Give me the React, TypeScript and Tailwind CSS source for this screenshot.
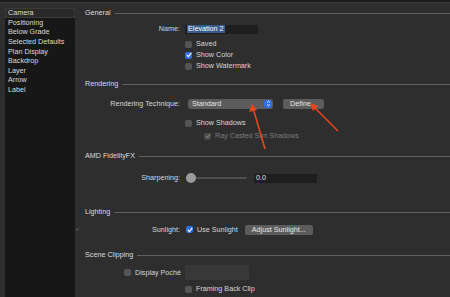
import React from "react"

const sidebarItems = [
  "Camera",
  "Positioning",
  "Below Grade",
  "Selected Defaults",
  "Plan Display",
  "Backdrop",
  "Layer",
  "Arrow",
  "Label",
]

function Header({ title, className = "" }: { title: string; className?: string }) {
  return (
    <div className={`flex h-[10px] items-center gap-[4px] pl-[10px] ${className}`}>
      <span className="text-[#dcdcdc]">{title}</span>
      <div className="h-px flex-1 bg-[#606060]" />
    </div>
  )
}

function Check({ checked = false, disabled = false }: { checked?: boolean; disabled?: boolean }) {
  if (checked) {
    return (
      <span
        className={`flex h-[7px] w-[7px] shrink-0 items-center justify-center rounded-[2px] ${
          disabled ? "bg-[#4a4a4a]" : "bg-[#2f6ee0]"
        }`}
      >
        <svg width="6" height="6" viewBox="0 0 6 6">
          <path
            d="M1 3.2 L2.4 4.7 L5 1.2"
            fill="none"
            stroke={disabled ? "#7a7a7a" : "#fff"}
            strokeWidth="1.1"
            strokeLinecap="round"
            strokeLinejoin="round"
          />
        </svg>
      </span>
    )
  }
  return <span className="h-[7px] w-[7px] shrink-0 rounded-[2px] bg-[#555555]" />
}

function Row({ label, children, className = "" }: { label?: string; children: React.ReactNode; className?: string }) {
  return (
    <div className={`flex items-center ${className}`}>
      <div className="w-[105px] text-right text-[#d6d6d6]">{label ? `${label}:` : ""}</div>
      <div className="flex items-center">{children}</div>
    </div>
  )
}

function CheckLine({
  label,
  checked,
  disabled,
  className = "",
}: {
  label: string
  checked?: boolean
  disabled?: boolean
  className?: string
}) {
  return (
    <div className={`flex h-[8px] items-center gap-[4px] whitespace-nowrap ${className}`}>
      <Check checked={checked} disabled={disabled} />
      <span className={disabled ? "text-[#7c7c7c]" : "text-[#d6d6d6]"}>{label}</span>
    </div>
  )
}

export default function App() {
  return (
    <div
      className="flex h-[297px] w-[450px] flex-col overflow-hidden bg-[#2e2e2e] text-[7.2px] leading-none"
      style={{ fontFamily: '"Liberation Sans", Arial, sans-serif' }}
    >
      <div className="h-[2px] shrink-0 bg-[#1b1b1b]" />
      <div className="h-px shrink-0 bg-[#3c3c3c]" />
      <div className="flex min-h-0 flex-1">
        {/* Sidebar */}
        <div className="ml-[5px] mt-[5px] w-[70px] bg-[#171717]">
          {sidebarItems.map((item, i) => (
            <div
              key={item}
              className={`flex h-[9.6px] items-center text-[#dadada] ${
                i === 0 ? "border border-[#3a3a3a] bg-[#2a2a2a] pl-[2px]" : "pl-[3px]"
              }`}
            >
              {item}
            </div>
          ))}
        </div>

        {/* Main */}
        <div className="relative flex-1 overflow-hidden">
          <Header title="General" className="mt-[5px]" />

          <Row label="Name" className="mt-[6px] h-[10px]">
            <div className="ml-[5px] flex h-[9px] w-[73px] items-center bg-[#1e1e1e] pl-[2px]">
              <span className="bg-[#3a5a8c] px-px text-white">Elevation 2</span>
            </div>
          </Row>

          <CheckLine label="Saved" className="ml-[110px] mt-[6px]" />
          <CheckLine label="Show Color" checked className="ml-[110px] mt-[3px]" />
          <CheckLine label="Show Watermark" className="ml-[110px] mt-[3px]" />

          <Header title="Rendering" className="mt-[9px]" />

          <Row label="Rendering Technique" className="mt-[9px] h-[11px]">
            <div className="ml-[8px] flex h-[10px] w-[85px] items-center justify-between rounded-[3px] bg-[#5c5c5c] pl-[4px] pr-px text-[#e6e6e6]">
              <span>Standard</span>
              <span className="flex h-[8px] w-[8px] items-center justify-center rounded-[2px] bg-[#2f6ee0]">
                <svg width="5" height="7" viewBox="0 0 5 7">
                  <path d="M1 2.6 L2.5 1.2 L4 2.6 M1 4.4 L2.5 5.8 L4 4.4" fill="none" stroke="#fff" strokeWidth="0.9" />
                </svg>
              </span>
            </div>
            <div className="ml-[10px] flex h-[10px] w-[41px] items-center justify-center rounded-[2px] bg-[#5c5c5c] text-[#e6e6e6]">
              Define...
            </div>
          </Row>

          <CheckLine label="Show Shadows" className="ml-[110px] mt-[10px]" />
          <CheckLine label="Ray Casted Sun Shadows" checked disabled className="ml-[129px] mt-[5px]" />

          <Header title="AMD FidelityFX" className="mt-[11px]" />

          <Row label="Sharpening" className="mt-[12px] h-[10px]">
            <div className="relative ml-[6px] flex h-[10px] w-[61px] items-center">
              <div className="h-[2px] w-full rounded-full bg-[#4e4e4e]" />
              <div className="absolute left-0 top-0 h-[10px] w-[10px] rounded-full bg-[#9a9a9a]" />
            </div>
            <div className="ml-[7px] flex h-[9px] w-[63px] items-center bg-[#1e1e1e] pl-[2px] text-[#e0e0e0]">0.0</div>
          </Row>

          <Header title="Lighting" className="mt-[24px]" />

          <Row label="Sunlight" className="mt-[8px] h-[10px]">
            <div className="ml-[6px] flex items-center gap-[4px]">
              <Check checked />
              <span className="text-[#d6d6d6]">Use Sunlight</span>
            </div>
            <div className="ml-[7px] flex h-[10px] w-[68px] items-center justify-center rounded-[2px] bg-[#5c5c5c] text-[#e6e6e6]">
              Adjust Sunlight...
            </div>
          </Row>

          <Header title="Scene Clipping" className="mt-[15px]" />

          <div className="mt-[5px] flex h-[15px] items-center">
            <CheckLine label="Display Poché" className="ml-[49px] w-[61px]" />
            <div className="h-[15px] w-[64px] bg-[#383838]" />
          </div>

          <CheckLine label="Framing Back Clip" className="ml-[110px] mt-[5px]" />
          <div className="ml-[110px] mt-[4px] h-[6px] w-[64px] bg-[#383838]" />

          <div className="absolute left-[1px] top-[225px] h-[3px] w-[3px] rounded-full bg-[#4a4a4a]" />

          {/* annotation arrows */}
          <svg className="pointer-events-none absolute left-0 top-[-3px]" width="375" height="297" viewBox="75 0 375 297">
            <path d="M265 149 L253 108" stroke="#e5461e" strokeWidth="1.6" fill="none" />
            <path d="M252 104 L249 112 L257 110 Z" fill="#e5461e" />
            <path d="M338 131 L313 106" stroke="#e5461e" strokeWidth="1.6" fill="none" />
            <path d="M310 103 L313 111 L318 106 Z" fill="#e5461e" />
          </svg>
        </div>
      </div>
    </div>
  )
}
